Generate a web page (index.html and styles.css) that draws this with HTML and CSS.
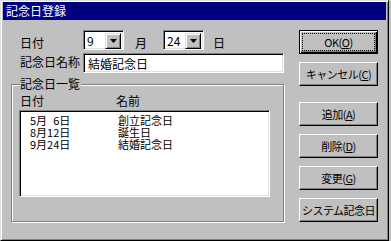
FILE: index.html
```html
<!DOCTYPE html>
<html lang="ja">
<head>
    <meta charset="UTF-8">
    <title>記念日登録</title>
    <link rel="stylesheet" href="styles.css">
</head>
<body>
    <div class="window">
        <div class="titlebar">記念日登録</div>
        <div class="content">
            <div class="main">
                <div class="row row-date">
                    <span class="label">日付</span>
                    <div class="combo sunken">
                        <span class="combo-value">9</span>
                        <span class="combo-btn"><svg width="7" height="4" viewBox="0 0 7 4"><path d="M0 0h7L3.5 4z" fill="#000"/></svg></span>
                    </div>
                    <span class="unit unit-month">月</span>
                    <div class="combo sunken">
                        <span class="combo-value">24</span>
                        <span class="combo-btn"><svg width="7" height="4" viewBox="0 0 7 4"><path d="M0 0h7L3.5 4z" fill="#000"/></svg></span>
                    </div>
                    <span class="unit unit-day">日</span>
                </div>
                <div class="row row-name">
                    <span class="label">記念日名称</span>
                    <div class="textbox sunken">結婚記念日</div>
                </div>
                <div class="group">
                    <span class="legend">記念日一覧</span>
                    <div class="list-head">
                        <span class="col-date">日付</span>
                        <span>名前</span>
                    </div>
                    <div class="listbox sunken">
                        <div class="item"><span class="col-date">5月&#8199;6日</span><span>創立記念日</span></div>
                        <div class="item"><span class="col-date">8月12日</span><span>誕生日</span></div>
                        <div class="item"><span class="col-date">9月24日</span><span>結婚記念日</span></div>
                    </div>
                </div>
            </div>
            <div class="buttons">
                <button class="btn btn-default"><span class="focus">OK(<u>O</u>)</span></button>
                <button class="btn">キャンセル(<u>C</u>)</button>
                <button class="btn btn-spaced">追加(<u>A</u>)</button>
                <button class="btn">削除(<u>D</u>)</button>
                <button class="btn">変更(<u>G</u>)</button>
                <button class="btn">システム記念日</button>
            </div>
        </div>
    </div>
</body>
</html>
```

FILE: styles.css
```css
body {
    margin: 0;
    background: #c0c0c0;
    font-family: "Noto Sans CJK JP", sans-serif;
    font-size: 12px;
    color: #000;
}
.window {
    width: 389px;
    height: 241px;
    box-sizing: border-box;
    border: 1px solid;
    border-color: #dfdfdf #000 #000 #dfdfdf;
    box-shadow: inset 1px 1px #fff, inset -1px -1px #808080;
    padding: 1px 2px 2px 2px;
}
.titlebar {
    height: 18px;
    line-height: 18px;
    background: #000080;
    color: #fff;
    padding-left: 3px;
}
.content {
    display: flex;
    padding: 10px 0 0 8px;
}
.main {
    width: 273px;
    display: flex;
    flex-direction: column;
}
.sunken {
    box-sizing: border-box;
    border: 1px solid;
    border-color: #808080 #fff #fff #808080;
    box-shadow: inset 1px 1px #000, inset -1px -1px #dfdfdf;
    background: #fff;
}
.row {
    display: flex;
    padding-left: 9px;
}
.row-date {
    align-items: flex-end;
    height: 20px;
}
.label {
    width: 63px;
    line-height: 12px;
}
.row-date .label,
.unit {
    padding-bottom: 1px;
    line-height: 12px;
}
.combo {
    width: 41px;
    height: 20px;
    display: flex;
    justify-content: space-between;
    padding: 2px;
}
.combo-value {
    padding-left: 1px;
    line-height: 15px;
}
.combo-btn {
    width: 16px;
    height: 16px;
    box-sizing: border-box;
    border: 1px solid;
    border-color: #dfdfdf #000 #000 #dfdfdf;
    box-shadow: inset 1px 1px #fff, inset -1px -1px #808080;
    background: #c0c0c0;
    display: flex;
    align-items: center;
    justify-content: center;
}
.unit-month {
    margin-left: 11px;
    width: 28px;
}
.unit-day {
    margin-left: 9px;
}
.row-name {
    margin-top: 3px;
    align-items: flex-start;
}
.row-name .label {
    padding-top: 3px;
}
.textbox {
    width: 201px;
    height: 20px;
    padding: 2px 0 0 4px;
    line-height: 15px;
}
.group {
    position: relative;
    margin-top: 11px;
    height: 138px;
    box-sizing: border-box;
    border: 1px solid #808080;
    box-shadow: inset 1px 1px #fff, 1px 1px #fff;
    padding: 10px 0 0 7px;
}
.legend {
    position: absolute;
    top: -7px;
    left: 8px;
    padding: 0 1px 0 0;
    background: #c0c0c0;
    line-height: 12px;
}
.list-head {
    display: flex;
    padding-left: 1px;
    line-height: 12px;
}
.list-head .col-date {
    width: 96px;
}
.listbox {
    margin-top: 3px;
    width: 251px;
    height: 87px;
    padding: 3px 0 0 10px;
    font-size: 11px;
}
.item {
    display: flex;
    line-height: 12px;
}
.item .col-date {
    width: 88px;
}
.buttons {
    margin-left: 15px;
    display: flex;
    flex-direction: column;
    gap: 8px;
}
.btn {
    width: 79px;
    height: 24px;
    box-sizing: border-box;
    border: 1px solid;
    border-color: #fff #000 #000 #fff;
    box-shadow: inset -1px -1px #808080;
    background: #c0c0c0;
    font-family: inherit;
    font-size: 11px;
    letter-spacing: -0.5px;
    white-space: nowrap;
    color: #000;
    padding: 0;
    display: flex;
    align-items: center;
    justify-content: center;
}
.btn u {
    text-decoration-thickness: 1px;
    text-underline-offset: 1px;
}
.btn-default {
    border-color: #000;
    box-shadow: inset 1px 1px #fff, inset -1px -1px #000, inset -2px -2px #808080;
}
.focus {
    flex: 1;
    align-self: stretch;
    margin: 3px;
    outline: 1px dotted #000;
    display: flex;
    align-items: center;
    justify-content: center;
}
.btn-spaced {
    margin-top: 8px;
}
```
